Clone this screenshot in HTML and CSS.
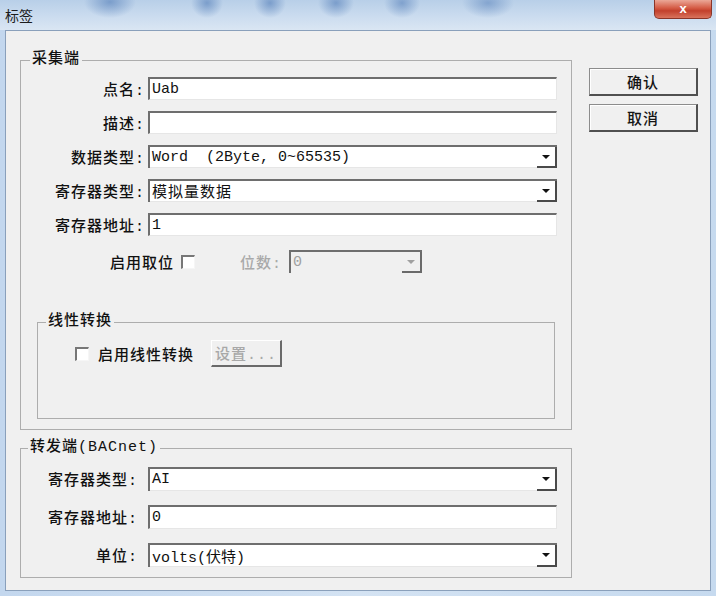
FILE: index.html
```html
<!DOCTYPE html>
<html lang="zh-CN">
<head>
<meta charset="utf-8">
<title>标签</title>
<link rel="stylesheet" href="styles.css">
</head>
<body>
<div class="window">
  <div class="titlebar">
    <span class="title">标签</span>
    <div class="close">x</div>
  </div>
  <div class="frame">
    <div class="client">
      <div class="main">
        <fieldset class="group g1">
          <legend>采集端</legend>
          <div class="form f1">
            <span class="lbl">点名:</span>
            <div class="edit">Uab</div>
            <span class="lbl">描述:</span>
            <div class="edit"></div>
            <span class="lbl">数据类型:</span>
            <div class="combo"><span class="val">Word  (2Byte, 0~65535)</span><span class="drop"></span></div>
            <span class="lbl">寄存器类型:</span>
            <div class="combo"><span class="val cjk">模拟量数据</span><span class="drop"></span></div>
            <span class="lbl">寄存器地址:</span>
            <div class="edit">1</div>
          </div>
          <div class="bitrow">
            <span class="lbl">启用取位</span>
            <span class="chk bitchk"></span>
            <span class="lbl dim bitlbl">位数:</span>
            <div class="combo disabled bitcombo"><span class="val">0</span><span class="drop"></span></div>
          </div>
          <fieldset class="group inner">
            <legend>线性转换</legend>
            <div class="lrow">
              <span class="chk"></span>
              <span class="lbl lintext">启用线性转换</span>
              <div class="btn setbtn">设置...</div>
            </div>
          </fieldset>
        </fieldset>
        <fieldset class="group g2">
          <legend>转发端(BACnet)</legend>
          <div class="form f2">
            <span class="lbl">寄存器类型:</span>
            <div class="combo"><span class="val">AI</span><span class="drop"></span></div>
            <span class="lbl">寄存器地址:</span>
            <div class="edit">0</div>
            <span class="lbl">单位:</span>
            <div class="combo"><span class="val">volts(伏特)</span><span class="drop"></span></div>
          </div>
        </fieldset>
      </div>
      <div class="side">
        <div class="btn okbtn">确认</div>
        <div class="btn okbtn">取消</div>
      </div>
    </div>
  </div>
</div>
</body>
</html>
```
FILE: styles.css
```css
* { box-sizing: border-box; }
html, body { margin: 0; padding: 0; }
body {
  width: 716px;
  height: 596px;
  overflow: hidden;
  font-family: "Liberation Mono", "Noto Sans CJK SC", monospace;
  font-size: 15px;
  color: #111;
  background: #cfe0f1;
}
.window {
  width: 716px;
  height: 596px;
  display: flex;
  flex-direction: column;
  background: linear-gradient(90deg, #c3d7ee, #d4e3f3 50%, #c6daef);
}
.titlebar {
  height: 30px;
  flex: none;
  display: flex;
  align-items: flex-start;
  justify-content: space-between;
  padding-left: 5px;
  background:
    radial-gradient(ellipse 26px 16px at 110px 2px, rgba(95,135,190,.7), rgba(95,135,190,0)),
    radial-gradient(ellipse 16px 15px at 207px 3px, rgba(95,135,190,.7), rgba(95,135,190,0)),
    radial-gradient(ellipse 16px 15px at 270px 3px, rgba(95,135,190,.7), rgba(95,135,190,0)),
    radial-gradient(ellipse 18px 15px at 336px 3px, rgba(95,135,190,.7), rgba(95,135,190,0)),
    radial-gradient(ellipse 18px 15px at 402px 3px, rgba(95,135,190,.65), rgba(95,135,190,0)),
    radial-gradient(ellipse 26px 15px at 488px 3px, rgba(95,135,190,.6), rgba(95,135,190,0)),
    linear-gradient(#b8cfe8, #cbdcef 55%, #dae6f3);
}
.title {
  font-family: "Noto Sans CJK SC", sans-serif;
  font-size: 14px;
  line-height: 14px;
  margin-top: 8px;
  color: #1c1c1c;
}
.close {
  width: 58px;
  height: 19px;
  margin-right: 4px;
  border: 1px solid #8a3528;
  border-top: none;
  border-radius: 0 0 5px 5px;
  background: linear-gradient(#eba797, #d45a44 45%, #c2402c 60%, #d9735c);
  color: #fff;
  font: bold 13px "Liberation Sans", sans-serif;
  display: flex;
  align-items: center;
  justify-content: center;
  padding-bottom: 2px;
}
.frame {
  flex: 1;
  display: flex;
  padding: 0 5px 5px;
}
.client {
  flex: 1;
  display: flex;
  align-items: flex-start;
  background: #f0f0f0;
  border: 1px solid #8aa0bb;
  padding: 20px 0 0 14px;
}
.main { width: 552px; flex: none; }
.side {
  margin-left: 17px;
  padding-top: 17px;
  display: flex;
  flex-direction: column;
  gap: 8px;
}

.group {
  margin: 0;
  padding: 0;
  border: 1px solid #adadad;
  min-width: 0;
}
.group legend {
  padding: 0 2px;
  line-height: 18px;
  font-size: 15px;
  font-weight: 500;
  letter-spacing: 1px;
}
.g1 { padding-bottom: 10px; }
.g1 legend { margin-left: 9px; }
.g2 { margin-top: 9px; padding-bottom: 10px; }
.g2 legend { margin-left: 7px; }
.inner { margin: 40px 16px 0 16px; }
.inner legend { margin-left: 8px; }

.lbl {
  font-size: 15px;
  font-weight: 500;
  letter-spacing: 1px;
  white-space: nowrap;
}
.dim { color: #a9a9a9; }

.form { display: grid; }
.f1 {
  margin-top: 8px;
  grid-template-columns: 124px 409px;
  column-gap: 3px;
  row-gap: 11px;
  grid-auto-rows: 23px;
}
.f2 {
  margin-top: 10px;
  grid-template-columns: 117px 409px;
  column-gap: 10px;
  row-gap: 14px;
  grid-auto-rows: 24px;
}
.form .lbl {
  text-align: right;
  align-self: center;
}

.edit {
  background: #fff;
  border-top: 2px solid #6e6e6e;
  border-left: 2px solid #6e6e6e;
  border-right: 1px solid #e6e6e6;
  border-bottom: 1px solid #e6e6e6;
  padding-left: 2px;
  display: flex;
  align-items: center;
  white-space: pre;
  color: #111;
}
.combo {
  display: flex;
  background: #fff;
  border-top: 2px solid #6e6e6e;
  border-left: 2px solid #6e6e6e;
  color: #111;
}
.combo .val {
  flex: 1;
  display: flex;
  align-items: center;
  padding-left: 2px;
  white-space: pre;
  border-bottom: 1px solid #e6e6e6;
}
.combo .cjk { letter-spacing: 1px; }
.combo .drop {
  width: 20px;
  flex: none;
  border-right: 2px solid #4a4a4a;
  border-bottom: 2px solid #4a4a4a;
  display: flex;
  align-items: center;
  justify-content: center;
}
.combo .drop::before {
  content: "";
  border-left: 4px solid transparent;
  border-right: 4px solid transparent;
  border-top: 4px solid #111;
}
.combo.disabled { background: #f0f0f0; color: #a0a0a0; }
.combo.disabled .val { border-bottom-color: #f0f0f0; }
.combo.disabled .drop { border-color: #6a6a6a; }
.combo.disabled .drop::before { border-top-color: #a0a0a0; }

.bitrow {
  display: flex;
  align-items: center;
  height: 23px;
  margin-top: 14px;
  padding-left: 89px;
}
.chk {
  width: 14px;
  height: 14px;
  flex: none;
  background: #fff;
  border-top: 2px solid #777;
  border-left: 2px solid #777;
  border-right: 1px solid #f6f6f6;
  border-bottom: 1px solid #f6f6f6;
}
.bitchk { margin-left: 7px; }
.bitlbl { margin-left: 45px; }
.bitcombo { margin-left: 7px; width: 133px; height: 23px; }

.lrow {
  display: flex;
  align-items: center;
  height: 27px;
  margin-top: 9px;
  margin-bottom: 51px;
  padding-left: 37px;
}
.lintext { margin-left: 9px; }

.btn {
  display: flex;
  align-items: center;
  justify-content: center;
  font-size: 15px;
  font-weight: 500;
  letter-spacing: 1px;
  background: #f0f0f0;
}
.okbtn {
  width: 109px;
  height: 28px;
  border: 1px solid #8c8c8c;
  border-right: 2px solid #505050;
  border-bottom: 2px solid #505050;
  box-shadow: inset 1px 1px 0 #fff;
  color: #151515;
}
.setbtn {
  width: 71px;
  height: 27px;
  margin-left: 17px;
  color: #a8a8a8;
  border-top: 1px solid #fff;
  border-left: 1px solid #fff;
  border-right: 2px solid #6a6a6a;
  border-bottom: 2px solid #6a6a6a;
}
```
